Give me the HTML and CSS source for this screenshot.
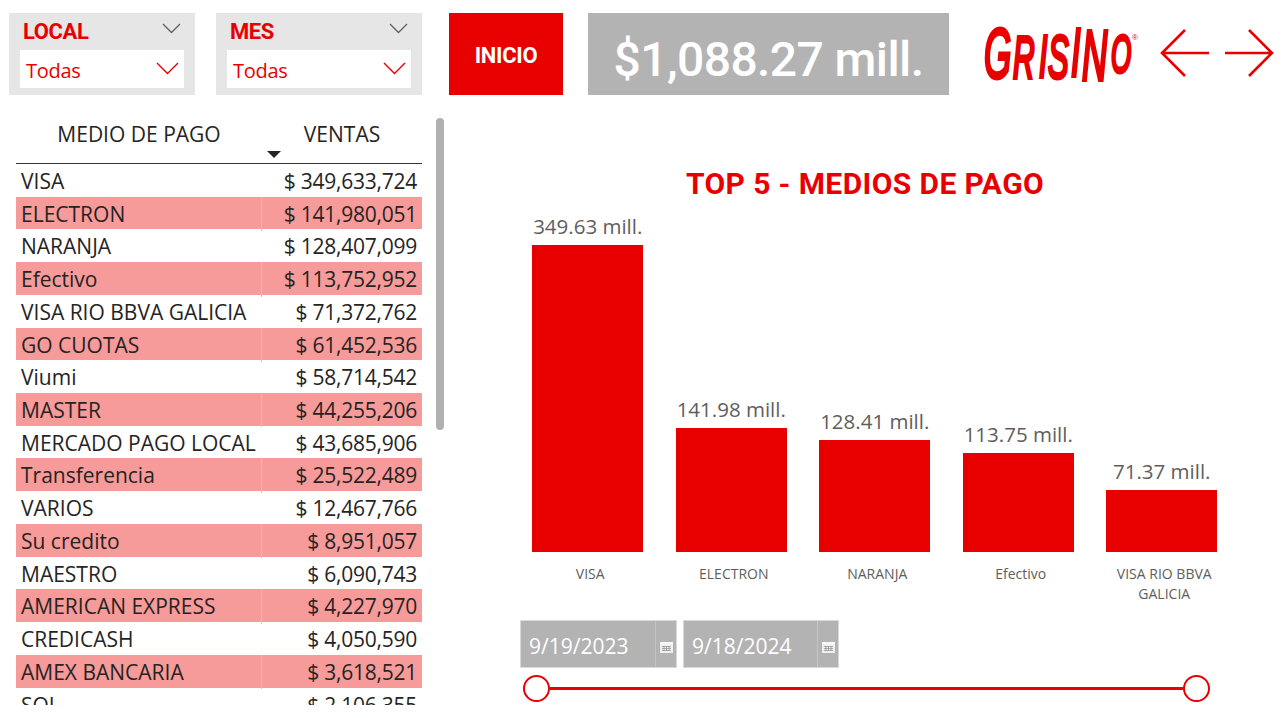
FILE: index.html
```html
<!DOCTYPE html>
<html lang="es">
<head>
    <meta charset="UTF-8">
    <meta name="viewport" content="width=device-width, initial-scale=1.0">
    <title>Medios de pago</title>
    <link rel="stylesheet" href="styles.css">
</head>
<body>
    <header class="top">
        <div class="slicer slicer-local">
            <div class="slicer-head">
                <span class="slicer-title">LOCAL</span>
                <svg class="chev-gray" width="20" height="11" viewBox="0 0 20 11"><path d="M1 1l8.5 8.5L18 1" fill="none" stroke="#5f6468" stroke-width="1.4"/></svg>
            </div>
            <div class="slicer-box">
                <span>Todas</span>
                <svg width="23" height="13" viewBox="0 0 23 13"><path d="M1 1l10.5 10.5L22 1" fill="none" stroke="#e80000" stroke-width="1.4"/></svg>
            </div>
        </div>
        <div class="slicer slicer-mes">
            <div class="slicer-head">
                <span class="slicer-title">MES</span>
                <svg class="chev-gray" width="20" height="11" viewBox="0 0 20 11"><path d="M1 1l8.5 8.5L18 1" fill="none" stroke="#5f6468" stroke-width="1.4"/></svg>
            </div>
            <div class="slicer-box">
                <span>Todas</span>
                <svg width="23" height="13" viewBox="0 0 23 13"><path d="M1 1l10.5 10.5L22 1" fill="none" stroke="#e80000" stroke-width="1.4"/></svg>
            </div>
        </div>
        <div class="btn-inicio">INICIO</div>
        <div class="kpi">$1,088.27 mill.</div>
        <div class="logo">
            <svg width="160" height="62" viewBox="0 0 160 62">
                <g transform="scale(.5 1)">
                    <text class="logo-text">
                        <tspan x="2" y="56" font-size="70">G</tspan>
                        <tspan x="60" y="56" font-size="60">R</tspan>
                        <tspan x="112" y="55" font-size="60">I</tspan>
                        <tspan x="130" y="56" font-size="62">S</tspan>
                        <tspan x="176" y="54" font-size="68">I</tspan>
                        <tspan x="198" y="58" font-size="70">N</tspan>
                        <tspan x="256" y="50" font-size="52">O</tspan>
                    </text>
                </g>
                <text class="logo-reg" x="149" y="18">®</text>
            </svg>
        </div>
        <div class="arrows">
            <svg width="50" height="50" viewBox="0 0 50 50"><path d="M49 25H2M25 2L2 25l23 23" fill="none" stroke="#e80000" stroke-width="2.6"/></svg>
            <svg width="50" height="50" viewBox="0 0 50 50"><path d="M1 25h47M25 2l23 23-23 23" fill="none" stroke="#e80000" stroke-width="2.6"/></svg>
        </div>
    </header>

    <main class="content">
        <section class="table-wrap">
            <div class="table">
                <div class="thead">
                    <div class="th th-name">MEDIO DE PAGO</div>
                    <div class="th th-val">VENTAS</div>
                    <div class="sort"></div>
                </div>
                <div class="row"><span class="name">VISA</span><span class="val">$ 349,633,724</span></div>
                <div class="row"><span class="name">ELECTRON</span><span class="val">$ 141,980,051</span></div>
                <div class="row"><span class="name">NARANJA</span><span class="val">$ 128,407,099</span></div>
                <div class="row"><span class="name">Efectivo</span><span class="val">$ 113,752,952</span></div>
                <div class="row"><span class="name">VISA RIO BBVA GALICIA</span><span class="val">$ 71,372,762</span></div>
                <div class="row"><span class="name">GO CUOTAS</span><span class="val">$ 61,452,536</span></div>
                <div class="row"><span class="name">Viumi</span><span class="val">$ 58,714,542</span></div>
                <div class="row"><span class="name">MASTER</span><span class="val">$ 44,255,206</span></div>
                <div class="row"><span class="name">MERCADO PAGO LOCAL</span><span class="val">$ 43,685,906</span></div>
                <div class="row"><span class="name">Transferencia</span><span class="val">$ 25,522,489</span></div>
                <div class="row"><span class="name">VARIOS</span><span class="val">$ 12,467,766</span></div>
                <div class="row"><span class="name">Su credito</span><span class="val">$ 8,951,057</span></div>
                <div class="row"><span class="name">MAESTRO</span><span class="val">$ 6,090,743</span></div>
                <div class="row"><span class="name">AMERICAN EXPRESS</span><span class="val">$ 4,227,970</span></div>
                <div class="row"><span class="name">CREDICASH</span><span class="val">$ 4,050,590</span></div>
                <div class="row"><span class="name">AMEX BANCARIA</span><span class="val">$ 3,618,521</span></div>
                <div class="row"><span class="name">SOL</span><span class="val">$ 2,106,355</span></div>
            </div>
            <div class="scrollbar"></div>
        </section>

        <section class="chart-area">
            <h1 class="chart-title">TOP 5 - MEDIOS DE PAGO</h1>
            <div class="bars">
                <div class="col"><span class="amount">349.63 mill.</span><div class="bar" style="height:307px"></div></div>
                <div class="col"><span class="amount">141.98 mill.</span><div class="bar" style="height:124px"></div></div>
                <div class="col"><span class="amount">128.41 mill.</span><div class="bar" style="height:112px"></div></div>
                <div class="col"><span class="amount">113.75 mill.</span><div class="bar" style="height:99px"></div></div>
                <div class="col"><span class="amount">71.37 mill.</span><div class="bar" style="height:62px"></div></div>
            </div>
            <div class="labels">
                <div>VISA</div>
                <div>ELECTRON</div>
                <div>NARANJA</div>
                <div>Efectivo</div>
                <div>VISA RIO BBVA GALICIA</div>
            </div>
            <div class="dates">
                <div class="date date-from">
                    <span class="date-text">9/19/2023</span>
                    <span class="date-icon"><svg width="13" height="12" viewBox="0 0 13 12"><path d="M0 1h13v11H0z" fill="#eee"/><path d="M0 1h13v2.5H0z" fill="#f8f8f8"/><path d="M2 5.5h9M2 7.5h9M2 9.5h9M4 5v5M6.5 5v5M9 5v5" stroke="#999" stroke-width=".8"/></svg></span>
                </div>
                <div class="date date-to">
                    <span class="date-text">9/18/2024</span>
                    <span class="date-icon"><svg width="13" height="12" viewBox="0 0 13 12"><path d="M0 1h13v11H0z" fill="#eee"/><path d="M0 1h13v2.5H0z" fill="#f8f8f8"/><path d="M2 5.5h9M2 7.5h9M2 9.5h9M4 5v5M6.5 5v5M9 5v5" stroke="#999" stroke-width=".8"/></svg></span>
                </div>
            </div>
            <div class="slider">
                <span class="knob"></span>
                <span class="track"></span>
                <span class="knob"></span>
            </div>
        </section>
    </main>
</body>
</html>
```

FILE: styles.css
```css
*{
    padding:0;
    margin:0;
    box-sizing:border-box;
}
html,body{
    width:1283px;
    height:718px;
    overflow:hidden;
    background:#fff;
}
body{
    font-family:"Open Sans","Liberation Sans",sans-serif;
    color:#252423;
}

/* top bar */
.top{
    display:flex;
    align-items:flex-start;
    height:95px;
    padding:13px 0 0 9px;
}
.slicer{
    height:82px;
    background:#e6e6e6;
    padding:0 11px;
}
.slicer-local{
    width:186px;
    margin-right:21px;
}
.slicer-mes{
    width:206px;
    margin-right:27px;
}
.slicer-head{
    display:flex;
    justify-content:space-between;
    align-items:center;
    height:37px;
    padding:0 2px 0 3px;
}
.slicer-title{
    font-family:Roboto,"Liberation Sans",sans-serif;
    font-weight:700;
    font-size:22px;
    color:#e80000;
    letter-spacing:-0.4px;
}
.chev-gray{
    margin-bottom:6px;
}
.slicer-box{
    display:flex;
    justify-content:space-between;
    align-items:center;
    height:38px;
    background:#fff;
    padding:2px 5px 0 6px;
    font-size:20px;
    letter-spacing:-0.3px;
    color:#e80000;
}
.slicer-box svg{
    margin-bottom:4px;
}
.btn-inicio{
    display:flex;
    align-items:center;
    justify-content:center;
    width:114px;
    height:82px;
    margin-right:25px;
    padding-top:3px;
    background:#e80000;
    color:#fff;
    font-family:Roboto,"Liberation Sans",sans-serif;
    font-weight:700;
    font-size:22px;
    letter-spacing:-0.3px;
}
.kpi{
    display:flex;
    align-items:center;
    justify-content:center;
    width:361px;
    height:82px;
    margin-right:34px;
    padding-top:10px;
    background:#b3b3b3;
    color:#fff;
    font-family:Roboto,"Liberation Sans",sans-serif;
    font-weight:500;
    font-size:48px;
    letter-spacing:-0.6px;
}
.logo{
    width:177px;
    height:70px;
    padding-top:9px;
}
.logo svg{
    display:block;
    overflow:visible;
}
.logo-text{
    font-family:"Liberation Sans",sans-serif;
    font-style:italic;
    fill:#e80000;
    stroke:#e80000;
    stroke-width:4px;
}
.logo-reg{
    font-family:"Liberation Sans",sans-serif;
    font-size:8px;
    fill:#e80000;
}
.arrows{
    display:flex;
    gap:14px;
    margin-top:15px;
}

/* main */
.content{
    display:flex;
    height:623px;
}
.table-wrap{
    display:flex;
    width:445px;
    height:610px;
    padding-left:16px;
}
.table{
    width:406px;
    height:610px;
    overflow:hidden;
}
.thead{
    display:grid;
    grid-template-columns:246px 160px;
    height:69px;
    padding-top:25px;
    border-bottom:1px solid #333;
    font-size:21px;
    line-height:28px;
    position:relative;
}
.th-name{
    text-align:center;
}
.th-val{
    text-align:center;
}
.sort{
    position:absolute;
    left:251px;
    bottom:5px;
    width:0;
    height:0;
    border-left:7px solid transparent;
    border-right:7px solid transparent;
    border-top:7px solid #252423;
}
.row{
    display:grid;
    grid-template-columns:246px 160px;
    height:32.72px;
    line-height:34.4px;
    font-size:21px;
}
.row:nth-child(odd){
    background:#f69a9a;
}
.name{
    padding-left:5px;
    white-space:nowrap;
    border-right:1px solid transparent;
}
.row:nth-child(odd) .name{
    border-right-color:#f8b4b4;
}
.val{
    text-align:right;
    padding-right:5px;
    white-space:nowrap;
    letter-spacing:-0.25px;
}
.scrollbar{
    width:8px;
    height:312px;
    margin:23px 0 0 14px;
    background:#b0b0b0;
    border-radius:4px;
}

/* chart */
.chart-area{
    width:838px;
    display:flex;
    flex-direction:column;
}
.chart-title{
    height:74px;
    padding-top:69px;
    text-align:center;
    font-family:Roboto,"Liberation Sans",sans-serif;
    font-weight:700;
    font-size:30px;
    line-height:40px;
    letter-spacing:.4px;
    color:#e80000;
    width:840px;
}
.bars{
    display:grid;
    grid-template-columns:repeat(5,143.5px);
    align-items:end;
    height:347px;
    padding-left:71px;
    margin-top:36px;
}
.col{
    display:flex;
    flex-direction:column;
    align-items:center;
}
.amount{
    font-size:20.5px;
    line-height:26px;
    margin-bottom:6px;
    color:#605e5c;
}
.bar{
    width:111px;
    background:#e80000;
}
.labels{
    display:grid;
    grid-template-columns:repeat(5,143.5px);
    padding:12px 0 0 73.5px;
    height:68px;
    text-align:center;
    font-size:14px;
    line-height:20px;
    color:#605e5c;
}
.labels div{
    padding:0 22px;
}
.dates{
    display:flex;
    gap:6px;
    padding-left:75px;
}
.date{
    display:flex;
    height:48px;
    background:#b3b3b3;
    border:1px solid #d9d9d9;
    color:#fff;
    font-size:21px;
    line-height:48px;
}
.date-from{
    width:157px;
}
.date-to{
    width:156px;
}
.date-text{
    flex:1;
    padding:1px 0 0 8px;
}
.date-icon{
    width:21px;
    border-left:1px solid #c4c4c4;
    display:flex;
    align-items:center;
    justify-content:center;
    padding-top:6px;
}
.slider{
    display:flex;
    align-items:center;
    height:26px;
    margin:7px 0 0 78px;
    width:687px;
}
.knob{
    width:27px;
    height:27px;
    flex:none;
    border:2px solid #e80000;
    border-radius:50%;
    background:#fff;
}
.track{
    flex:1;
    height:3px;
    background:#e80000;
}
```
